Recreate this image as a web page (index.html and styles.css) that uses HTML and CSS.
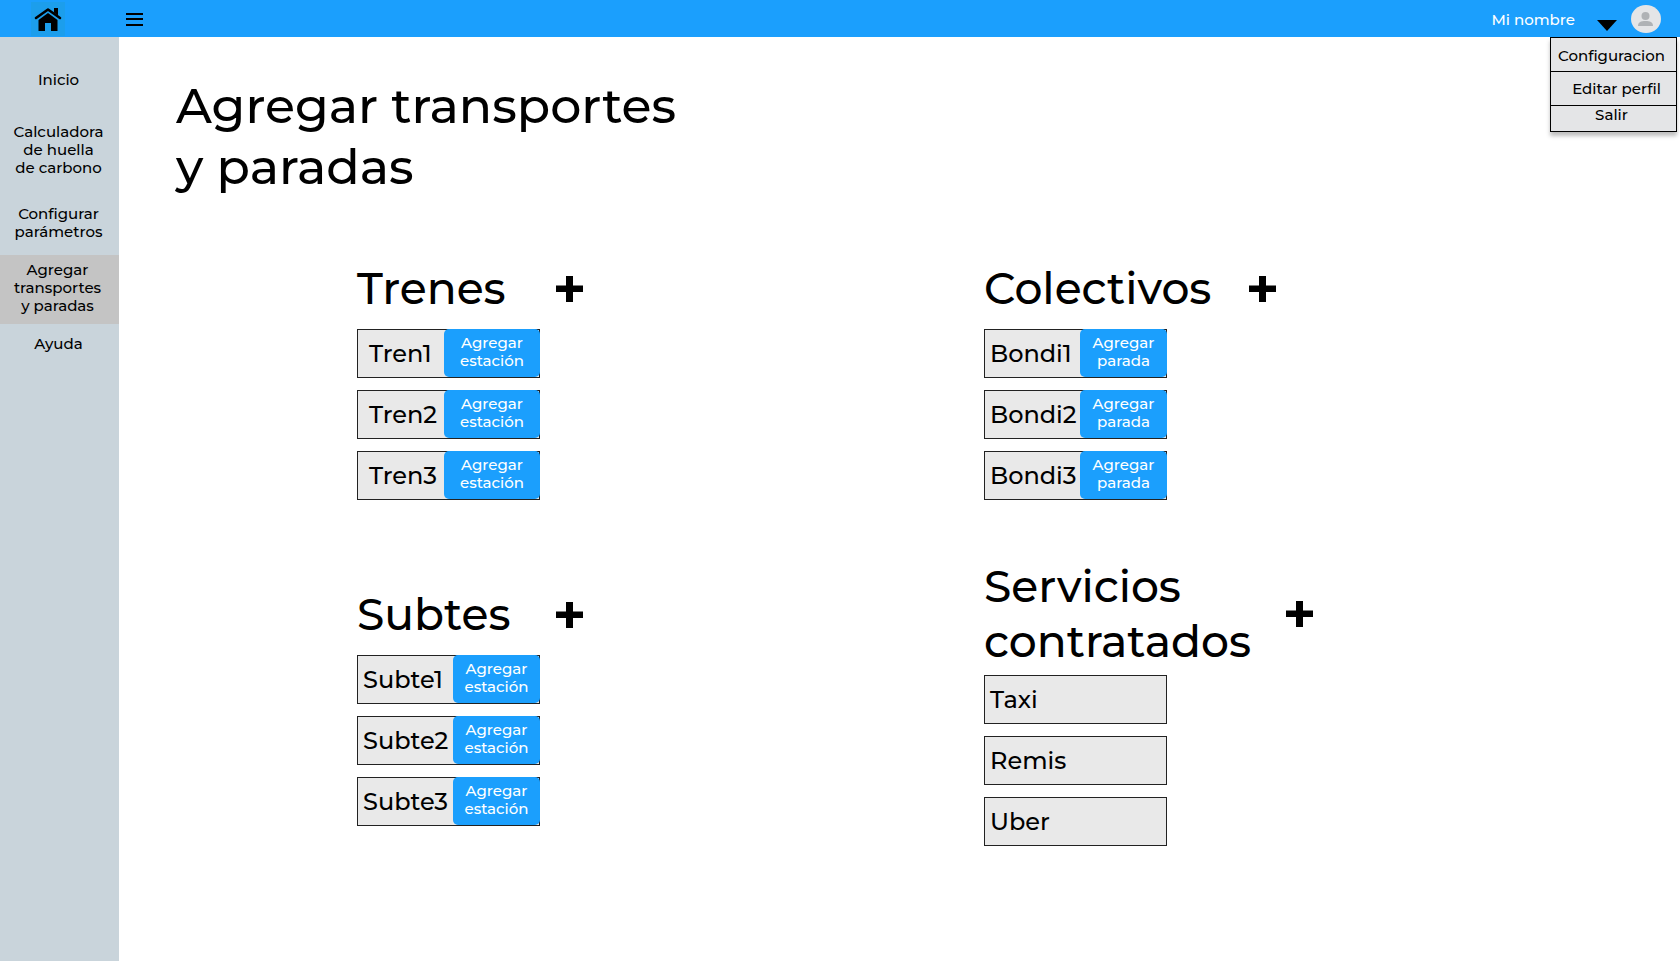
FILE: index.html
```html
<!DOCTYPE html>
<html lang="es">
<head>
<meta charset="utf-8">
<title>Agregar transportes y paradas</title>
<meta name="viewport" content="width=device-width, initial-scale=1">
<link rel="stylesheet" href="styles.css">
</head>
<body>
<header class="topbar">
  <a class="home" href="#" aria-label="Inicio">
    <svg width="34" height="34" viewBox="0 0 34 34" aria-hidden="true">
      <path d="M5 16 17 7.500 29 16" fill="none" stroke="#000" stroke-width="2.600" stroke-linecap="round" stroke-linejoin="round"/>
      <path d="M23 6h4v7.500l-4-3zM7.500 18 17 11l9.500 7v11H20v-8h-6v8H7.500z"/>
    </svg>
  </a>
  <button class="burger" type="button" aria-label="Abrir menú">
    <svg width="17" height="13" viewBox="0 0 17 13" aria-hidden="true"><path d="M0 0h17v2H0zM0 5h17v2H0zM0 11h17v2H0z"/></svg>
  </button>
  <div class="account">
    <span class="user-name">Mi nombre</span>
    <button class="caret" type="button" aria-label="Opciones de usuario" aria-expanded="true">
      <svg width="20" height="11" viewBox="0 0 20 11" aria-hidden="true"><path d="M0 0h20L10 11z"/></svg>
    </button>
    <svg class="avatar" width="30" height="28" viewBox="0 0 30 28" aria-hidden="true">
      <ellipse cx="15" cy="14" rx="15" ry="14" fill="#e4e5e7"/>
      <circle cx="14.500" cy="11" r="4" fill="#afb2b5"/>
      <path d="M7 21c0-4 3-5 7.500-5s7.500 1 7.500 5z" fill="#afb2b5"/>
    </svg>
    <nav class="user-menu" aria-label="Usuario">
      <a class="user-link" href="#">Configuracion</a>
      <a class="user-link user-link-end" href="#">Editar perfil</a>
      <a class="user-link user-link-short" href="#">Salir</a>
    </nav>
  </div>
</header>
<div class="layout">
  <nav class="sidebar" aria-label="Principal">
    <a class="side-link" href="#">Inicio</a>
    <a class="side-link side-link-tall" href="#">Calculadora<br>de huella<br>de carbono</a>
    <a class="side-link" href="#">Configurar<br>parámetros</a>
    <a class="side-link side-link-active" href="#" aria-current="page">Agregar<br>transportes<br>y paradas</a>
    <a class="side-link side-link-last" href="#">Ayuda</a>
  </nav>
  <main class="content">
    <h1 class="page-title">Agregar transportes<br>y paradas</h1>
    <div class="groups">
      <section class="group">
        <div class="group-head">
          <h2 class="group-title">Trenes</h2>
          <button class="add" type="button" aria-label="Agregar tren"><svg width="27" height="26" viewBox="0 0 27 26" aria-hidden="true"><path d="M10 0h7v9.500h10v6.500H17v10h-7V16H0V9.500h10z"/></svg></button>
        </div>
        <ul class="items">
          <li class="item item-inset"><span>Tren1</span><button class="action action-wide" type="button">Agregar<br>estación</button></li>
          <li class="item item-inset"><span>Tren2</span><button class="action action-wide" type="button">Agregar<br>estación</button></li>
          <li class="item item-inset"><span>Tren3</span><button class="action action-wide" type="button">Agregar<br>estación</button></li>
        </ul>
      </section>
      <section class="group">
        <div class="group-head group-head-medium">
          <h2 class="group-title">Colectivos</h2>
          <button class="add" type="button" aria-label="Agregar colectivo"><svg width="27" height="26" viewBox="0 0 27 26" aria-hidden="true"><path d="M10 0h7v9.500h10v6.500H17v10h-7V16H0V9.500h10z"/></svg></button>
        </div>
        <ul class="items">
          <li class="item"><span>Bondi1</span><button class="action" type="button">Agregar<br>parada</button></li>
          <li class="item"><span>Bondi2</span><button class="action" type="button">Agregar<br>parada</button></li>
          <li class="item"><span>Bondi3</span><button class="action" type="button">Agregar<br>parada</button></li>
        </ul>
      </section>
      <section class="group group-lowered">
        <div class="group-head">
          <h2 class="group-title">Subtes</h2>
          <button class="add" type="button" aria-label="Agregar subte"><svg width="27" height="26" viewBox="0 0 27 26" aria-hidden="true"><path d="M10 0h7v9.500h10v6.500H17v10h-7V16H0V9.500h10z"/></svg></button>
        </div>
        <ul class="items">
          <li class="item"><span>Subte1</span><button class="action" type="button">Agregar<br>estación</button></li>
          <li class="item"><span>Subte2</span><button class="action" type="button">Agregar<br>estación</button></li>
          <li class="item"><span>Subte3</span><button class="action" type="button">Agregar<br>estación</button></li>
        </ul>
      </section>
      <section class="group group-tight">
        <div class="group-head group-head-large">
          <h2 class="group-title">Servicios<br>contratados</h2>
          <button class="add" type="button" aria-label="Agregar servicio"><svg width="27" height="26" viewBox="0 0 27 26" aria-hidden="true"><path d="M10 0h7v9.500h10v6.500H17v10h-7V16H0V9.500h10z"/></svg></button>
        </div>
        <ul class="items">
          <li class="item"><span>Taxi</span></li>
          <li class="item"><span>Remis</span></li>
          <li class="item"><span>Uber</span></li>
        </ul>
      </section>
    </div>
  </main>
</div>
</body>
</html>
```

FILE: styles.css
```css
* {
  box-sizing: border-box;
}

body {
  display: flex;
  flex-direction: column;
  min-height: 100vh;
  margin: 0;
  background: #fff;
  color: #000;
  font-family: Montserrat, Inter, sans-serif;
  font-size: 15px;
  font-weight: 500;
  line-height: 18px;
}

a {
  color: inherit;
  text-decoration: none;
}

button {
  padding: 0;
  border: 0;
  background: none;
  color: inherit;
  font: inherit;
  cursor: pointer;
}

svg {
  display: block;
}

.topbar {
  display: flex;
  align-items: center;
  height: 37px;
  padding: 0 19px 0 31px;
  background: #1b9ffd;
}

.home {
  margin-right: 61px;
  background: #1c9eec;
}

.burger {
  padding-top: 2px;
}

.account {
  position: relative;
  display: flex;
  align-items: center;
  height: 100%;
  margin-left: auto;
}

.user-name {
  margin-right: 22px;
  padding-top: 2px;
  color: #fff;
}

.caret {
  margin-right: 14px;
  padding-top: 14px;
}

.user-menu {
  position: absolute;
  top: 100%;
  right: -16px;
  width: 127px;
  border: 1px solid #000;
  background: #e4e5e7;
  box-shadow: 0 4px 4px rgba(0, 0, 0, 0.25);
}

.user-link {
  display: block;
  padding: 9px 4px 6px 0;
  text-align: center;
}

.user-link + .user-link {
  border-top: 1px solid #000;
}

.user-link-end {
  padding: 8px 15px 7px 0;
  text-align: right;
}

.user-link-short {
  padding: 0 4px 7px 0;
}

.layout {
  display: flex;
  flex: 1;
}

.sidebar {
  display: flex;
  flex: 0 0 119px;
  flex-direction: column;
  padding-top: 20px;
  background: #c9d4db;
  text-align: center;
}

.side-link {
  padding: 14px 2px 14px 0;
}

.side-link-tall {
  padding-top: 20px;
}

.side-link-active {
  padding: 6px 4px 9px 0;
  background: #c4c4c4;
}

.side-link-last {
  padding-top: 11px;
}

.content {
  flex: 1;
  padding: 38px 69px 40px 57px;
}

.page-title {
  margin: 0 0 64px;
  font-size: 49px;
  font-weight: 500;
  line-height: 61px;
}

.groups {
  display: grid;
  grid-template-columns: 1fr 1fr;
  row-gap: 59px;
  align-items: start;
  margin-left: 181px;
}

.group {
  display: flex;
  flex-direction: column;
  gap: 13px;
}

.group-lowered {
  padding-top: 28px;
}

.group-tight {
  gap: 6px;
}

.group-head {
  display: flex;
  align-items: center;
  justify-content: space-between;
  width: 226px;
}

.group-head-medium {
  width: 292px;
}

.group-head-large {
  width: 329px;
}

.group-title {
  margin: 0;
  font-size: 44px;
  font-weight: 500;
  line-height: 55px;
}

.items {
  display: grid;
  gap: 12px;
  width: 183px;
  margin: 0;
  padding: 0;
  list-style: none;
}

.item {
  display: flex;
  align-items: center;
  justify-content: space-between;
  height: 49px;
  padding-left: 6px;
  background: #e9e9e9;
  box-shadow: inset 0 0 0 1px #222;
  font-size: 24px;
  line-height: 29px;
}

.item-inset {
  padding-left: 12px;
}

.action {
  align-self: flex-start;
  width: 87px;
  height: 48px;
  padding-bottom: 2px;
  border-radius: 5px;
  background: #1b9ffd;
  color: #fff;
  font-size: 15px;
  line-height: 18px;
}

.action-wide {
  width: 96px;
}
```
